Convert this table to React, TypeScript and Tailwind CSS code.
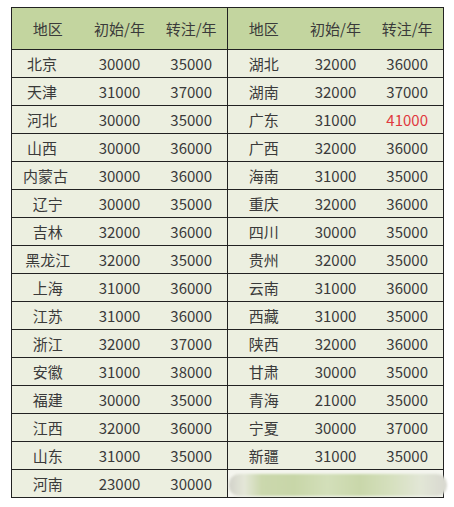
import React from 'react';

type Row = { name: string; start: string; transfer: string; red?: boolean; pad?: string };

// left half: first rows are left-aligned in the source sheet
const leftRows: Row[] = [
  { name: '北京', start: '30000', transfer: '35000', pad: 'justify-start pl-[15px]' },
  { name: '天津', start: '31000', transfer: '37000', pad: 'justify-start pl-[15px]' },
  { name: '河北', start: '30000', transfer: '35000', pad: 'justify-start pl-[15px]' },
  { name: '山西', start: '30000', transfer: '36000', pad: 'justify-start pl-[15px]' },
  { name: '内蒙古', start: '30000', transfer: '36000', pad: 'justify-start pl-[11px]' },
  { name: '辽宁', start: '30000', transfer: '35000' },
  { name: '吉林', start: '32000', transfer: '36000' },
  { name: '黑龙江', start: '32000', transfer: '35000' },
  { name: '上海', start: '31000', transfer: '36000' },
  { name: '江苏', start: '31000', transfer: '36000' },
  { name: '浙江', start: '32000', transfer: '37000' },
  { name: '安徽', start: '31000', transfer: '38000' },
  { name: '福建', start: '30000', transfer: '35000' },
  { name: '江西', start: '32000', transfer: '36000' },
  { name: '山东', start: '31000', transfer: '35000' },
  { name: '河南', start: '23000', transfer: '30000' },
];

const rightRows: Row[] = [
  { name: '湖北', start: '32000', transfer: '36000' },
  { name: '湖南', start: '32000', transfer: '37000' },
  { name: '广东', start: '31000', transfer: '41000', red: true },
  { name: '广西', start: '32000', transfer: '36000' },
  { name: '海南', start: '31000', transfer: '35000' },
  { name: '重庆', start: '32000', transfer: '36000' },
  { name: '四川', start: '30000', transfer: '35000' },
  { name: '贵州', start: '32000', transfer: '35000' },
  { name: '云南', start: '31000', transfer: '36000' },
  { name: '西藏', start: '31000', transfer: '35000' },
  { name: '陕西', start: '32000', transfer: '36000' },
  { name: '甘肃', start: '30000', transfer: '35000' },
  { name: '青海', start: '21000', transfer: '35000' },
  { name: '宁夏', start: '30000', transfer: '37000' },
  { name: '新疆', start: '31000', transfer: '35000' },
];

function Header() {
  return (
    <div className="grid grid-cols-3 h-[42px] bg-[#c3d59f] border-b border-[#222]">
      <div className="flex items-center justify-center">地区</div>
      <div className="flex items-center justify-center">初始/年</div>
      <div className="flex items-center justify-center">转注/年</div>
    </div>
  );
}

function DataRow({ row }: { row: Row }) {
  return (
    <div className="grid grid-cols-3 h-[28px] bg-[#ecefe0] border-b border-[#222]">
      <div className={`flex items-center ${row.pad ?? 'justify-center'}`}>{row.name}</div>
      <div className="flex items-center justify-center">{row.start}</div>
      <div className={`flex items-center justify-center ${row.red ? 'text-[#e0393e]' : ''}`}>
        {row.transfer}
      </div>
    </div>
  );
}

export default function App() {
  return (
    <div
      className="w-[454px] h-[507px] bg-white pt-[7px] pl-[11px] text-[15px] leading-none text-[#3a3a3a]"
      style={{ fontFamily: '"Noto Sans CJK SC", "Noto Sans", sans-serif' }}
    >
      <div className="flex w-[433px] border-t border-[#222]">
        {/* Left half */}
        <div className="w-[217px] border-l border-r border-[#222]">
          <Header />
          {leftRows.map((r) => (
            <DataRow key={r.name} row={r} />
          ))}
        </div>

        {/* Right half */}
        <div className="w-[216px] border-r border-[#222]">
          <Header />
          {rightRows.map((r) => (
            <DataRow key={r.name} row={r} />
          ))}
          <div className="relative h-[28px] bg-[#f4f5ee] border-b border-[#222]">
            {/* blurred watermark strip */}
            <div
              className="absolute left-[1px] -right-[4px] top-[4px] h-[22px] rounded-[10px] blur-[1px]"
              style={{
                background:
                  'linear-gradient(90deg, #d2d2ca 0%, #e4e7d8 7%, #cbd8ad 15%, #c8d6a8 30%, #d3dfba 45%, #c9d7aa 60%, #d6e0bf 75%, #e2e6d6 88%, #d8d8d0 100%)',
              }}
            />
          </div>
        </div>
      </div>
    </div>
  );
}
